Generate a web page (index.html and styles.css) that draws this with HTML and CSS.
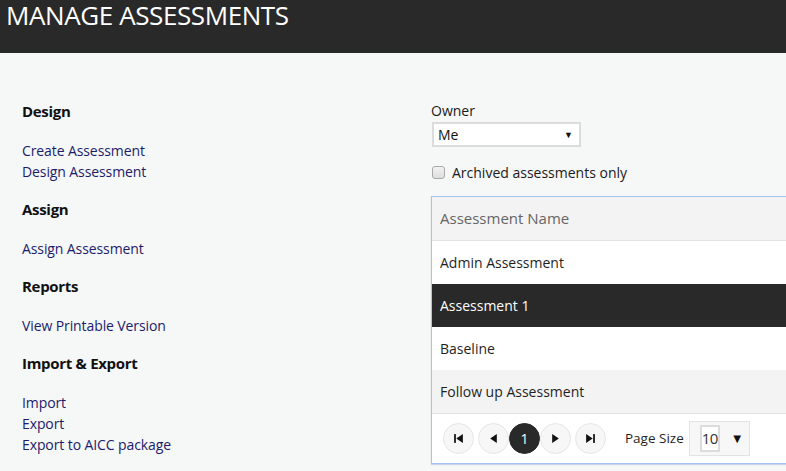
FILE: index.html
```html
<!DOCTYPE html>
<html>
<head>
<meta charset="utf-8">
<link rel="stylesheet" href="styles.css">
</head>
<body>
<header class="topbar"><h1 class="title">MANAGE ASSESSMENTS</h1></header>
<main class="main">
  <nav class="sidebar">
    <h3 class="sec-title">Design</h3>
    <ul class="links">
      <li><a href="#">Create Assessment</a></li>
      <li><a href="#">Design Assessment</a></li>
    </ul>
    <h3 class="sec-title">Assign</h3>
    <ul class="links">
      <li><a href="#">Assign Assessment</a></li>
    </ul>
    <h3 class="sec-title">Reports</h3>
    <ul class="links">
      <li><a href="#">View Printable Version</a></li>
    </ul>
    <h3 class="sec-title">Import &amp; Export</h3>
    <ul class="links">
      <li><a href="#">Import</a></li>
      <li><a href="#">Export</a></li>
      <li><a href="#">Export to AICC package</a></li>
    </ul>
  </nav>
  <section class="content">
    <div class="owner-label">Owner</div>
    <div class="select"><span>Me</span><span class="caret">&#9660;</span></div>
    <label class="check-row"><span class="checkbox"></span><span>Archived assessments only</span></label>
    <div class="grid">
      <div class="grid-head">Assessment Name</div>
      <div class="row">Admin Assessment</div>
      <div class="row selected">Assessment 1</div>
      <div class="row">Baseline</div>
      <div class="row alt">Follow up Assessment</div>
      <div class="pager">
        <div class="pbtns">
          <span class="pbtn"><svg width="11" height="11" viewBox="0 0 10 10"><rect x="1" y="1" width="1.6" height="8" fill="#111"/><path d="M9 1 L3 5 L9 9 Z" fill="#111"/></svg></span>
          <span class="pbtn"><svg width="11" height="11" viewBox="0 0 10 10"><path d="M8 1 L2 5 L8 9 Z" fill="#111"/></svg></span>
          <span class="pbtn current">1</span>
          <span class="pbtn"><svg width="11" height="11" viewBox="0 0 10 10"><path d="M2 1 L8 5 L2 9 Z" fill="#111"/></svg></span>
          <span class="pbtn"><svg width="11" height="11" viewBox="0 0 10 10"><path d="M1 1 L7 5 L1 9 Z" fill="#111"/><rect x="7.4" y="1" width="1.6" height="8" fill="#111"/></svg></span>
        </div>
        <span class="psize-label">Page Size</span>
        <div class="psize"><span class="psize-input">10</span><span class="psize-caret">&#9660;</span></div>
      </div>
    </div>
  </section>
</main>
</body>
</html>
```
FILE: styles.css
```css
html, body {
  margin: 0;
  padding: 0;
  overflow: hidden;
}
body {
  background: #f6f7f7;
  font-family: "Open Sans", "Noto Sans", sans-serif;
  color: #111;
  width: 786px;
  height: 471px;
}
.topbar {
  background: #292929;
  height: 53px;
  box-sizing: border-box;
  padding: 0 6px;
}
.title {
  margin: 0;
  color: #fff;
  font-weight: 400;
  font-size: 26px;
  line-height: 30px;
  letter-spacing: -0.4px;
}
.main {
  display: flex;
  padding-top: 47.5px;
}
.sidebar {
  width: 409px;
  padding-left: 22px;
  flex: none;
}
.sec-title {
  margin: 0;
  font-size: 15px;
  font-weight: 700;
  line-height: 21px;
  color: #111;
  letter-spacing: -0.3px;
}
.links {
  list-style: none;
  margin: 18px 0 17px;
  padding: 0;
}
.links li {
  line-height: 21px;
  font-size: 14px;
}
.links a {
  color: #1c1c6b;
  text-decoration: none;
  letter-spacing: -0.1px;
}
.content {
  flex: none;
  width: 420px;
}
.owner-label {
  font-size: 14px;
  line-height: 20px;
  color: #1a1a1a;
}
.select {
  margin-top: 1px;
  margin-left: 1px;
  width: 149px;
  height: 25px;
  box-sizing: border-box;
  border: 2px solid #dcdcdc;
  background: #fff;
  display: flex;
  align-items: center;
  justify-content: space-between;
  padding: 0 6px 0 4px;
  font-size: 14px;
  color: #111;
}
.caret {
  font-size: 9px;
  color: #111;
}
.check-row {
  display: flex;
  align-items: center;
  gap: 7px;
  margin-top: 19px;
  margin-left: 1px;
  font-size: 14px;
  line-height: 14px;
  color: #1a1a1a;
}
.checkbox {
  width: 11px;
  height: 11px;
  border: 1px solid #a9a9a9;
  border-radius: 3px;
  background: linear-gradient(#f2f2f2, #dedede);
}
.grid {
  margin-top: 16px;
  width: 430px;
  border: 1px solid #a4c2f4;
  border-right: none;
  background: #fff;
  box-shadow: 0 1px 1px rgba(120,150,210,0.35);
}
.grid-head {
  height: 43px;
  line-height: 43px;
  background: #f3f3f3;
  border-bottom: 1px solid #e3e3e3;
  padding-left: 8px;
  color: #666;
  font-size: 15px;
}
.row {
  height: 43px;
  line-height: 43px;
  padding-left: 8px;
  font-size: 14px;
  color: #1f1f1f;
  background: #fff;
}
.row.selected {
  background: #292929;
  color: #fff;
}
.row.alt {
  background: #f3f3f3;
}
.pager {
  border-top: 1px solid #e3e3e3;
  height: 49px;
  display: flex;
  align-items: center;
  padding-left: 11px;
}
.pbtns {
  display: flex;
  align-items: center;
}
.pbtn {
  width: 29px;
  height: 29px;
  border-radius: 50%;
  border: 1px solid #e6e6e6;
  background: #f7f7f7;
  display: flex;
  align-items: center;
  justify-content: center;
  margin-right: 4px;
  font-size: 14px;
}
.pbtn:nth-child(2) { margin-right: 0; }
.pbtn:nth-child(3) { margin-right: 0; }
.pbtn.current {
  background: #292929;
  border-color: #292929;
  color: #fff;
}
.psize-label {
  margin-left: 15px;
  font-size: 13.5px;
  color: #1f1f1f;
}
.psize {
  margin-left: 5px;
  width: 61px;
  height: 35px;
  box-sizing: border-box;
  border: 1px solid #e3e3e3;
  background: #f7f7f7;
  display: flex;
  align-items: center;
  padding-left: 10px;
}
.psize-input {
  width: 20px;
  height: 27px;
  box-sizing: border-box;
  border: 2px solid #dcdcdc;
  background: #fff;
  font-size: 15px;
  line-height: 23px;
  color: #333;
  text-align: center;
  letter-spacing: -0.5px;
}
.psize-caret {
  margin-left: 11px;
  font-size: 13px;
  color: #111;
}
```
